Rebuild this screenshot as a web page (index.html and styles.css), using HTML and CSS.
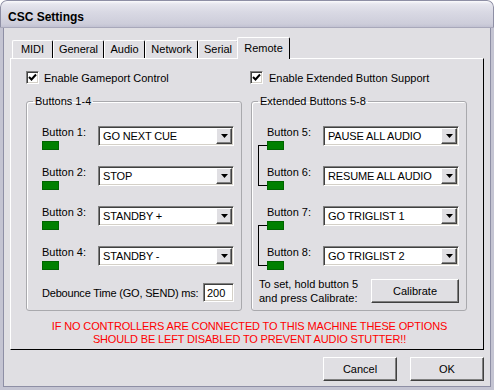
FILE: index.html
```html
<!DOCTYPE html>
<html lang="en">
<head>
    <meta charset="UTF-8">
    <meta name="viewport" content="width=device-width, initial-scale=1.0">
    <title>CSC Settings</title>
    <link rel="stylesheet" href="styles.css">
</head>
<body>

    <div class="window">
        <div class="titlebar">CSC Settings</div>

        <div class="client">
            <div class="tabs">
                <div class="tab tab-midi">MIDI</div>
                <div class="tab tab-general">General</div>
                <div class="tab tab-audio">Audio</div>
                <div class="tab tab-network">Network</div>
                <div class="tab tab-serial">Serial</div>
                <div class="tab tab-remote active">Remote</div>
            </div>

            <div class="panel">
                <div class="cols">
                    <div class="check"><span class="box"><svg width="9" height="9" viewBox="0 0 9 9"><path d="M1 4 L3.5 6.5 L8 1.5" fill="none" stroke="#000" stroke-width="2"/></svg></span>Enable Gameport Control</div>
                    <div class="check check-right"><span class="box"><svg width="9" height="9" viewBox="0 0 9 9"><path d="M1 4 L3.5 6.5 L8 1.5" fill="none" stroke="#000" stroke-width="2"/></svg></span>Enable Extended Button Support</div>

                    <fieldset class="group">
                        <legend>Buttons 1-4</legend>
                        <div class="rows">
                            <div class="row">
                                <div class="led-col"><span class="lbl">Button 1:</span><span class="led"></span></div>
                                <div class="combo"><span class="combo-text">GO NEXT CUE</span><span class="drop"><svg width="7" height="4" viewBox="0 0 7 4"><path d="M0 0 H7 L3.5 4 Z"/></svg></span></div>
                            </div>
                            <div class="row">
                                <div class="led-col"><span class="lbl">Button 2:</span><span class="led"></span></div>
                                <div class="combo"><span class="combo-text">STOP</span><span class="drop"><svg width="7" height="4" viewBox="0 0 7 4"><path d="M0 0 H7 L3.5 4 Z"/></svg></span></div>
                            </div>
                            <div class="row">
                                <div class="led-col"><span class="lbl">Button 3:</span><span class="led"></span></div>
                                <div class="combo"><span class="combo-text">STANDBY +</span><span class="drop"><svg width="7" height="4" viewBox="0 0 7 4"><path d="M0 0 H7 L3.5 4 Z"/></svg></span></div>
                            </div>
                            <div class="row">
                                <div class="led-col"><span class="lbl">Button 4:</span><span class="led"></span></div>
                                <div class="combo"><span class="combo-text">STANDBY -</span><span class="drop"><svg width="7" height="4" viewBox="0 0 7 4"><path d="M0 0 H7 L3.5 4 Z"/></svg></span></div>
                            </div>
                        </div>
                        <div class="debounce"><span class="debounce-label">Debounce Time (GO, SEND) ms:</span><span class="field">200</span></div>
                    </fieldset>

                    <fieldset class="group">
                        <legend>Extended Buttons 5-8</legend>
                        <div class="rows">
                            <div class="pair">
                                <div class="row">
                                    <div class="led-col"><span class="lbl">Button 5:</span><span class="led"></span></div>
                                    <div class="combo"><span class="combo-text">PAUSE ALL AUDIO</span><span class="drop"><svg width="7" height="4" viewBox="0 0 7 4"><path d="M0 0 H7 L3.5 4 Z"/></svg></span></div>
                                </div>
                                <div class="row">
                                    <div class="led-col"><span class="lbl">Button 6:</span><span class="led"></span></div>
                                    <div class="combo"><span class="combo-text">RESUME ALL AUDIO</span><span class="drop"><svg width="7" height="4" viewBox="0 0 7 4"><path d="M0 0 H7 L3.5 4 Z"/></svg></span></div>
                                </div>
                            </div>
                            <div class="pair">
                                <div class="row">
                                    <div class="led-col"><span class="lbl">Button 7:</span><span class="led"></span></div>
                                    <div class="combo"><span class="combo-text">GO TRIGLIST 1</span><span class="drop"><svg width="7" height="4" viewBox="0 0 7 4"><path d="M0 0 H7 L3.5 4 Z"/></svg></span></div>
                                </div>
                                <div class="row">
                                    <div class="led-col"><span class="lbl">Button 8:</span><span class="led"></span></div>
                                    <div class="combo"><span class="combo-text">GO TRIGLIST 2</span><span class="drop"><svg width="7" height="4" viewBox="0 0 7 4"><path d="M0 0 H7 L3.5 4 Z"/></svg></span></div>
                                </div>
                            </div>
                        </div>
                        <div class="calib">
                            <p>To set, hold button 5<br>and press Calibrate:</p>
                            <button class="btn btn-calib">Calibrate</button>
                        </div>
                    </fieldset>
                </div>

                <p class="warning">IF NO CONTROLLERS ARE CONNECTED TO THIS MACHINE THESE OPTIONS<br>SHOULD BE LEFT DISABLED TO PREVENT AUDIO STUTTER!!</p>
            </div>

            <div class="footer">
                <button class="btn">Cancel</button>
                <button class="btn">OK</button>
            </div>
        </div>
    </div>

</body>
</html>
```

FILE: styles.css
```css
body {
    margin: 0;
    font-family: "Liberation Sans", Arial, sans-serif;
    font-size: 11px;
    color: #000;
    background-color: #fff;
}
.window {
    width: 494px;
    height: 390px;
    display: flex;
    flex-direction: column;
    background-color: #e0dfe3;
    border-radius: 7px 7px 0 0;
    overflow: hidden;
}
.titlebar {
    height: 28px;
    box-sizing: border-box;
    padding: 4px 0 0 7px;
    display: flex;
    align-items: center;
    font-size: 12px;
    font-weight: bold;
    background: linear-gradient(#fbfbfd 0, #e6e6ee 3px, #d9d9e4 40%, #cdcdda 85%, #bebed0 100%);
    border: 1px solid #8e8fa5;
    border-bottom: 0;
    border-radius: 7px 7px 0 0;
}
.client {
    flex: 1;
    display: flex;
    flex-direction: column;
    padding: 9px 7px 0 7px;
    border: 3px solid #c4c4d2;
    border-top: 0;
    box-shadow: inset 1px 0 #8e8fa5, inset -1px 0 #8e8fa5, inset 0 -1px #8e8fa5;
    outline: 1px solid #a8a8ba;
}

/* tab strip */
.tabs {
    display: flex;
    align-items: flex-end;
    height: 21px;
    padding-left: 2px;
}
.tab {
    height: 18px;
    box-sizing: border-box;
    border-top: 1px solid #fff;
    border-left: 1px solid #fff;
    border-right: 1px solid #000;
    border-radius: 2px 2px 0 0;
    text-align: center;
    line-height: 17px;
}
.tab-midi { width: 41px; }
.tab-general { width: 51px; }
.tab-audio { width: 41px; }
.tab-network { width: 53px; }
.tab-serial { width: 40px; }
.tab-remote { width: 53px; }
.tab.active {
    height: 22px;
    margin-left: -1px;
    margin-bottom: -1px;
    background-color: #e0dfe3;
    position: relative;
    z-index: 1;
    line-height: 21px;
}

/* main page */
.panel {
    height: 292px;
    box-sizing: border-box;
    border-top: 1px solid #fff;
    border-left: 1px solid #fff;
    border-right: 1px solid #000;
    border-bottom: 1px solid #000;
    padding: 12px 0 0 15px;
}
.cols {
    display: grid;
    grid-template-columns: 216px 216px;
    column-gap: 9px;
    row-gap: 11px;
}
.check {
    display: flex;
    align-items: center;
    height: 13px;
    gap: 5px;
}
.check-right {
    margin-left: -1px;
    gap: 6px;
}
.box {
    width: 13px;
    height: 13px;
    box-sizing: border-box;
    background-color: #fff;
    border: 1px solid;
    border-color: #808080 #fff #fff #808080;
    box-shadow: inset 1px 1px #404040, inset -1px -1px #d4d0c8;
    display: flex;
    align-items: center;
    justify-content: center;
}
.group {
    margin: 0;
    min-width: 0;
    padding: 18px 7px 5px 6px;
    border: 1px solid #a9a9ad;
    border-radius: 3px;
    box-shadow: inset 1px 1px #fff;
}
.group legend {
    padding: 0 2px;
    line-height: 13px;
}
.rows {
    display: flex;
    flex-direction: column;
    gap: 16px;
    padding-left: 9px;
}
.pair {
    display: flex;
    flex-direction: column;
    gap: 16px;
    position: relative;
}
.pair::before {
    content: "";
    position: absolute;
    left: -9px;
    top: 19px;
    width: 9px;
    height: 41px;
    box-sizing: border-box;
    border: 1px solid #000;
    border-right: 0;
}
.row {
    display: flex;
    height: 24px;
}
.led-col {
    width: 56px;
    display: flex;
    flex-direction: column;
    gap: 2px;
}
.lbl {
    line-height: 13px;
}
.led {
    width: 17px;
    height: 9px;
    box-sizing: border-box;
    background-color: #008000;
    border: 1px solid #006400;
}
.combo {
    flex: 1;
    height: 20px;
    box-sizing: border-box;
    background-color: #fff;
    border: 1px solid;
    border-color: #808080 #fff #fff #808080;
    box-shadow: inset 1px 1px #404040, inset -1px -1px #d4d0c8;
    display: flex;
    align-items: center;
    padding: 1px 1px 1px 4px;
}
.combo-text {
    flex: 1;
    white-space: nowrap;
    letter-spacing: -0.15px;
}
.drop {
    width: 16px;
    height: 16px;
    box-sizing: border-box;
    background-color: #e0dfe3;
    border: 1px solid;
    border-color: #fff #404040 #404040 #fff;
    box-shadow: inset -1px -1px #808080;
    display: flex;
    align-items: center;
    justify-content: center;
}
.debounce {
    display: flex;
    align-items: center;
    margin-top: 13px;
    padding-left: 9px;
}
.debounce-label {
    white-space: nowrap;
    letter-spacing: -0.2px;
}
.field {
    width: 31px;
    height: 19px;
    margin-left: auto;
    box-sizing: border-box;
    background-color: #fff;
    border: 1px solid;
    border-color: #808080 #fff #fff #808080;
    box-shadow: inset 1px 1px #404040, inset -1px -1px #d4d0c8;
    padding: 3px 0 0 3px;
    font-size: 11px;
}
.calib {
    display: flex;
    align-items: center;
    justify-content: space-between;
    margin-top: 7px;
    margin-left: 1px;
}
.calib p {
    margin: 0;
    line-height: 14px;
}
.btn {
    height: 24px;
    width: 74px;
    background-color: #e0dfe3;
    border: 1px solid;
    border-color: #fff #404040 #404040 #fff;
    box-shadow: inset -1px -1px #808080;
    font-family: "Liberation Sans", Arial, sans-serif;
    font-size: 11px;
    color: #000;
    padding: 0;
}
.btn-calib {
    width: 88px;
}
.warning {
    margin: 9px 0 0 0;
    padding-right: 10px;
    text-align: center;
    color: #ff0000;
    line-height: 13px;
    letter-spacing: -0.15px;
}
.footer {
    display: flex;
    justify-content: flex-end;
    gap: 13px;
    margin-top: 7px;
}
```
